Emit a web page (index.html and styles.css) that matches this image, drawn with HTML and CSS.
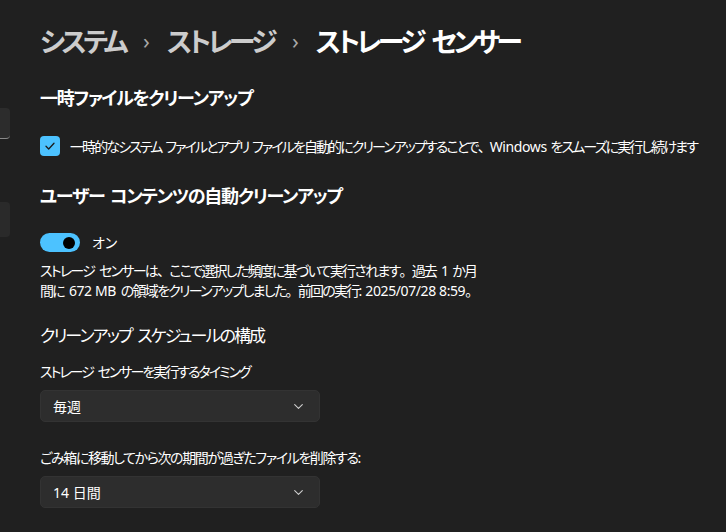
FILE: index.html
```html
<!doctype html>
<html>
<head>
<meta charset="utf-8">
<title>ストレージ センサー</title>
<link rel="stylesheet" href="styles.css">
</head>
<body>
    <!-- 左側のナビ (切れている) -->
    <div class="side">
        <div class="side-search"></div>
        <div class="side-item"></div>
    </div>

    <div class="main">
        <div class="crumbs">
            <span class="crumb">システム</span>
            <span class="sep">›</span>
            <span class="crumb">ストレージ</span>
            <span class="sep">›</span>
            <span class="crumb current">ストレージ センサー</span>
        </div>

        <h2 class="sec-title first">一時ファイルをクリーンアップ</h2>
        <div class="check-row">
            <span class="check">
                <svg width="12" height="12" viewBox="0 0 12 12"><path d="M2 6.3 L4.7 9 L10 3.3" fill="none" stroke="#1b1b1b" stroke-width="1.3" stroke-linecap="round" stroke-linejoin="round"/></svg>
            </span>
            <span class="text check-text">一時的なシステム ファイルとアプリ ファイルを自動的にクリーンアップすることで<span class="punct">、</span><span class="latin">Windows</span> をスムーズに実行し続けます</span>
        </div>

        <h2 class="sec-title">ユーザー コンテンツの自動クリーンアップ</h2>
        <div class="toggle-row">
            <span class="toggle"><span class="knob"></span></span>
            <span class="text">オン</span>
        </div>
        <p class="desc">ストレージ センサーは<span class="punct">、</span>ここで選択した頻度に基づいて実行されます<span class="punct">。</span>過去 1 か月<br>間に <span class="latin">672 MB</span> の領域をクリーンアップしました<span class="punct">。</span>前回の実行: <span class="latin">2025/07/28 8:59</span><span class="punct">。</span></p>

        <h3 class="sub-title">クリーンアップ スケジュールの構成</h3>
        <div class="label first">ストレージ センサーを実行するタイミング</div>
        <div class="select">
            <span>毎週</span>
            <svg width="9" height="5" viewBox="0 0 9 5"><path d="M0.7 0.7 L4.5 4.3 L8.3 0.7" fill="none" stroke="#cfcfcf" stroke-width="1.1" stroke-linecap="round" stroke-linejoin="round"/></svg>
        </div>

        <div class="label second">ごみ箱に移動してから次の期間が過ぎたファイルを削除する:</div>
        <div class="select">
            <span>14 日間</span>
            <svg width="9" height="5" viewBox="0 0 9 5"><path d="M0.7 0.7 L4.5 4.3 L8.3 0.7" fill="none" stroke="#cfcfcf" stroke-width="1.1" stroke-linecap="round" stroke-linejoin="round"/></svg>
        </div>
    </div>
</body>
</html>
```

FILE: styles.css
```css
body{
    margin: 0;
    background: #202020;
    color: #ffffff;
    font-family: "Noto Sans", "Noto Sans CJK JP", sans-serif;
    font-feature-settings: "palt";
    overflow: hidden;
}

/* 左のナビの端 */
.side{
    position: absolute;
    left: 0;
    top: 0;
}
.side-search{
    position: absolute;
    left: -20px;
    top: 108px;
    width: 30px;
    height: 31px;
    background: #2c2c2c;
    border-radius: 4px;
    border-bottom: 1px solid #8a8a8a;
    box-sizing: border-box;
}
.side-item{
    position: absolute;
    left: -20px;
    top: 202px;
    width: 30px;
    height: 35px;
    background: #2a2a2a;
    border-radius: 4px;
}

.main{
    padding: 20px 0 0 40px;
}

/* パンくず */
.crumbs{
    display: flex;
    align-items: center;
    height: 40px;
    font-size: 27px;
    font-weight: 600;
    white-space: nowrap;
}
.crumb{
    color: #cccccc;
    letter-spacing: -3.6px;
    word-spacing: 5px;
}
.crumb.current{
    color: #ffffff;
}
.sep{
    color: #a8a8a8;
    font-size: 22px;
    font-weight: 400;
    margin: 0 17px 0 18px;
}

.sec-title{
    margin: 0;
    font-size: 18px;
    font-weight: 600;
    line-height: 28px;
    letter-spacing: -1.3px;
    word-spacing: 2px;
}
.sec-title.first{
    margin-top: 24px;
}

.check-row{
    display: flex;
    align-items: center;
    margin-top: 24px;
    height: 20px;
    margin-bottom: 26px;
    white-space: nowrap;
}
.check{
    width: 20px;
    height: 20px;
    border-radius: 4px;
    background: #4cc2ff;
    display: flex;
    align-items: center;
    justify-content: center;
    margin-right: 10px;
}
.text{
    font-size: 14px;
}
.check-text{
    letter-spacing: -1.9px;
    word-spacing: 2px;
}

/* 句読点は全角のまま */
.punct{
    font-feature-settings: normal;
}
/* 英数字は詰めすぎない */
.latin{
    letter-spacing: -0.4px;
    word-spacing: 0;
}

.toggle-row{
    display: flex;
    align-items: center;
    margin-top: 22px;
    height: 20px;
}
.toggle{
    width: 40px;
    height: 19px;
    border-radius: 10px;
    background: #4cc2ff;
    position: relative;
    margin-right: 12px;
}
.knob{
    position: absolute;
    right: 5px;
    top: 4px;
    width: 12px;
    height: 12px;
    border-radius: 50%;
    background: #000000;
}

.desc{
    margin: 9px 0 0 0;
    font-size: 14px;
    line-height: 20px;
    letter-spacing: -1.75px;
    word-spacing: 3px;
    white-space: nowrap;
}

.sub-title{
    margin: 22px 0 0 0;
    font-size: 17px;
    font-weight: 400;
    line-height: 26px;
    letter-spacing: -1.9px;
    word-spacing: 3px;
}

.label{
    margin-top: 13px;
    font-size: 14px;
    line-height: 20px;
    white-space: nowrap;
}
.label.first{
    letter-spacing: -2px;
    word-spacing: 3px;
}
.label.second{
    margin-top: 26px;
    letter-spacing: -1.4px;
}

.select{
    margin-top: 8px;
    width: 280px;
    height: 32px;
    box-sizing: border-box;
    background: #2d2d2d;
    border: 1px solid #333333;
    border-radius: 5px;
    display: flex;
    align-items: center;
    justify-content: space-between;
    padding: 0 16px 0 12px;
    font-size: 14px;
}
```
